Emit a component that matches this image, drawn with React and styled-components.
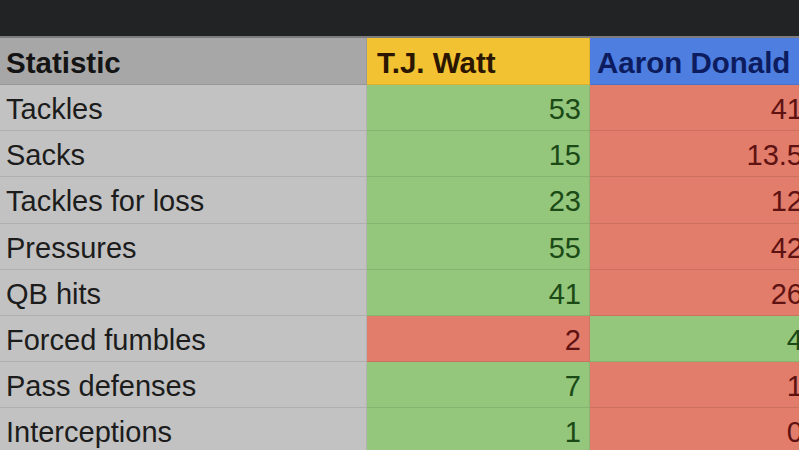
import React from 'react';
import styled, { createGlobalStyle } from 'styled-components';

const GlobalStyle = createGlobalStyle`
  html, body {
    margin: 0;
    padding: 0;
    background: #222324;
  }
  body {
    font-family: "Liberation Sans", Arial, sans-serif;
  }
`;

const Page = styled.div`
  width: 799px;
  height: 450px;
  overflow: hidden;
  background: #222324;
  display: flex;
  flex-direction: column;
`;

const TopBar = styled.div`
  height: 36px;
  flex-shrink: 0;
  background: #222324;
  border-bottom: 2px solid #7d7d7f;
`;

const Sheet = styled.div`
  display: grid;
  grid-template-columns: 367px 223px 222px;
  grid-template-rows: 47px;
  grid-auto-rows: 46.2px;
  width: 812px;
`;

const palette = {
  label: '#c2c2c2',
  labelHead: '#a7a7a7',
  yellow: '#f3c232',
  blue: '#4e7fe0',
  good: '#94c67c',
  bad: '#e27c6b',
};

const ink = {
  label: '#1c1c1c',
  labelHead: '#141414',
  yellow: '#2b1600',
  blue: '#0c1c5e',
  good: '#1b4a17',
  bad: '#5e1212',
};

const Cell = styled.div`
  display: flex;
  align-items: center;
  justify-content: ${(p) => (p.$num ? 'flex-end' : 'flex-start')};
  padding: ${(p) => (p.$num ? '4px 8px 0 8px' : '4px 8px 0 6px')};
  background: ${(p) => palette[p.$tone]};
  color: ${(p) => ink[p.$tone]};
  font-size: ${(p) => (p.$head ? '29.5px' : '29px')};
  font-weight: ${(p) => (p.$head ? 700 : 400)};
  border-bottom: 1px solid rgba(0, 0, 0, 0.09);
  border-right: 1px solid rgba(0, 0, 0, 0.08);
  white-space: nowrap;
  overflow: hidden;
  box-sizing: border-box;
`;

const rows = [
  ['Tackles', 53, 41],
  ['Sacks', 15, 13.5],
  ['Tackles for loss', 23, 12],
  ['Pressures', 55, 42],
  ['QB hits', 41, 26],
  ['Forced fumbles', 2, 4],
  ['Pass defenses', 7, 1],
  ['Interceptions', 1, 0],
];

export default function App() {
  return (
    <Page>
      <GlobalStyle />
      <TopBar />
      <Sheet>
        <Cell $tone="labelHead" $head>Statistic</Cell>
        <Cell $tone="yellow" $head style={{ paddingLeft: 10 }}>T.J. Watt</Cell>
        <Cell $tone="blue" $head style={{ paddingLeft: 7 }}>Aaron Donald</Cell>
        {rows.map(([name, watt, donald]) => (
          <React.Fragment key={name}>
            <Cell $tone="label">{name}</Cell>
            <Cell $tone={watt >= donald ? 'good' : 'bad'} $num>{watt}</Cell>
            <Cell $tone={donald > watt ? 'good' : 'bad'} $num>{donald}</Cell>
          </React.Fragment>
        ))}
      </Sheet>
    </Page>
  );
}
